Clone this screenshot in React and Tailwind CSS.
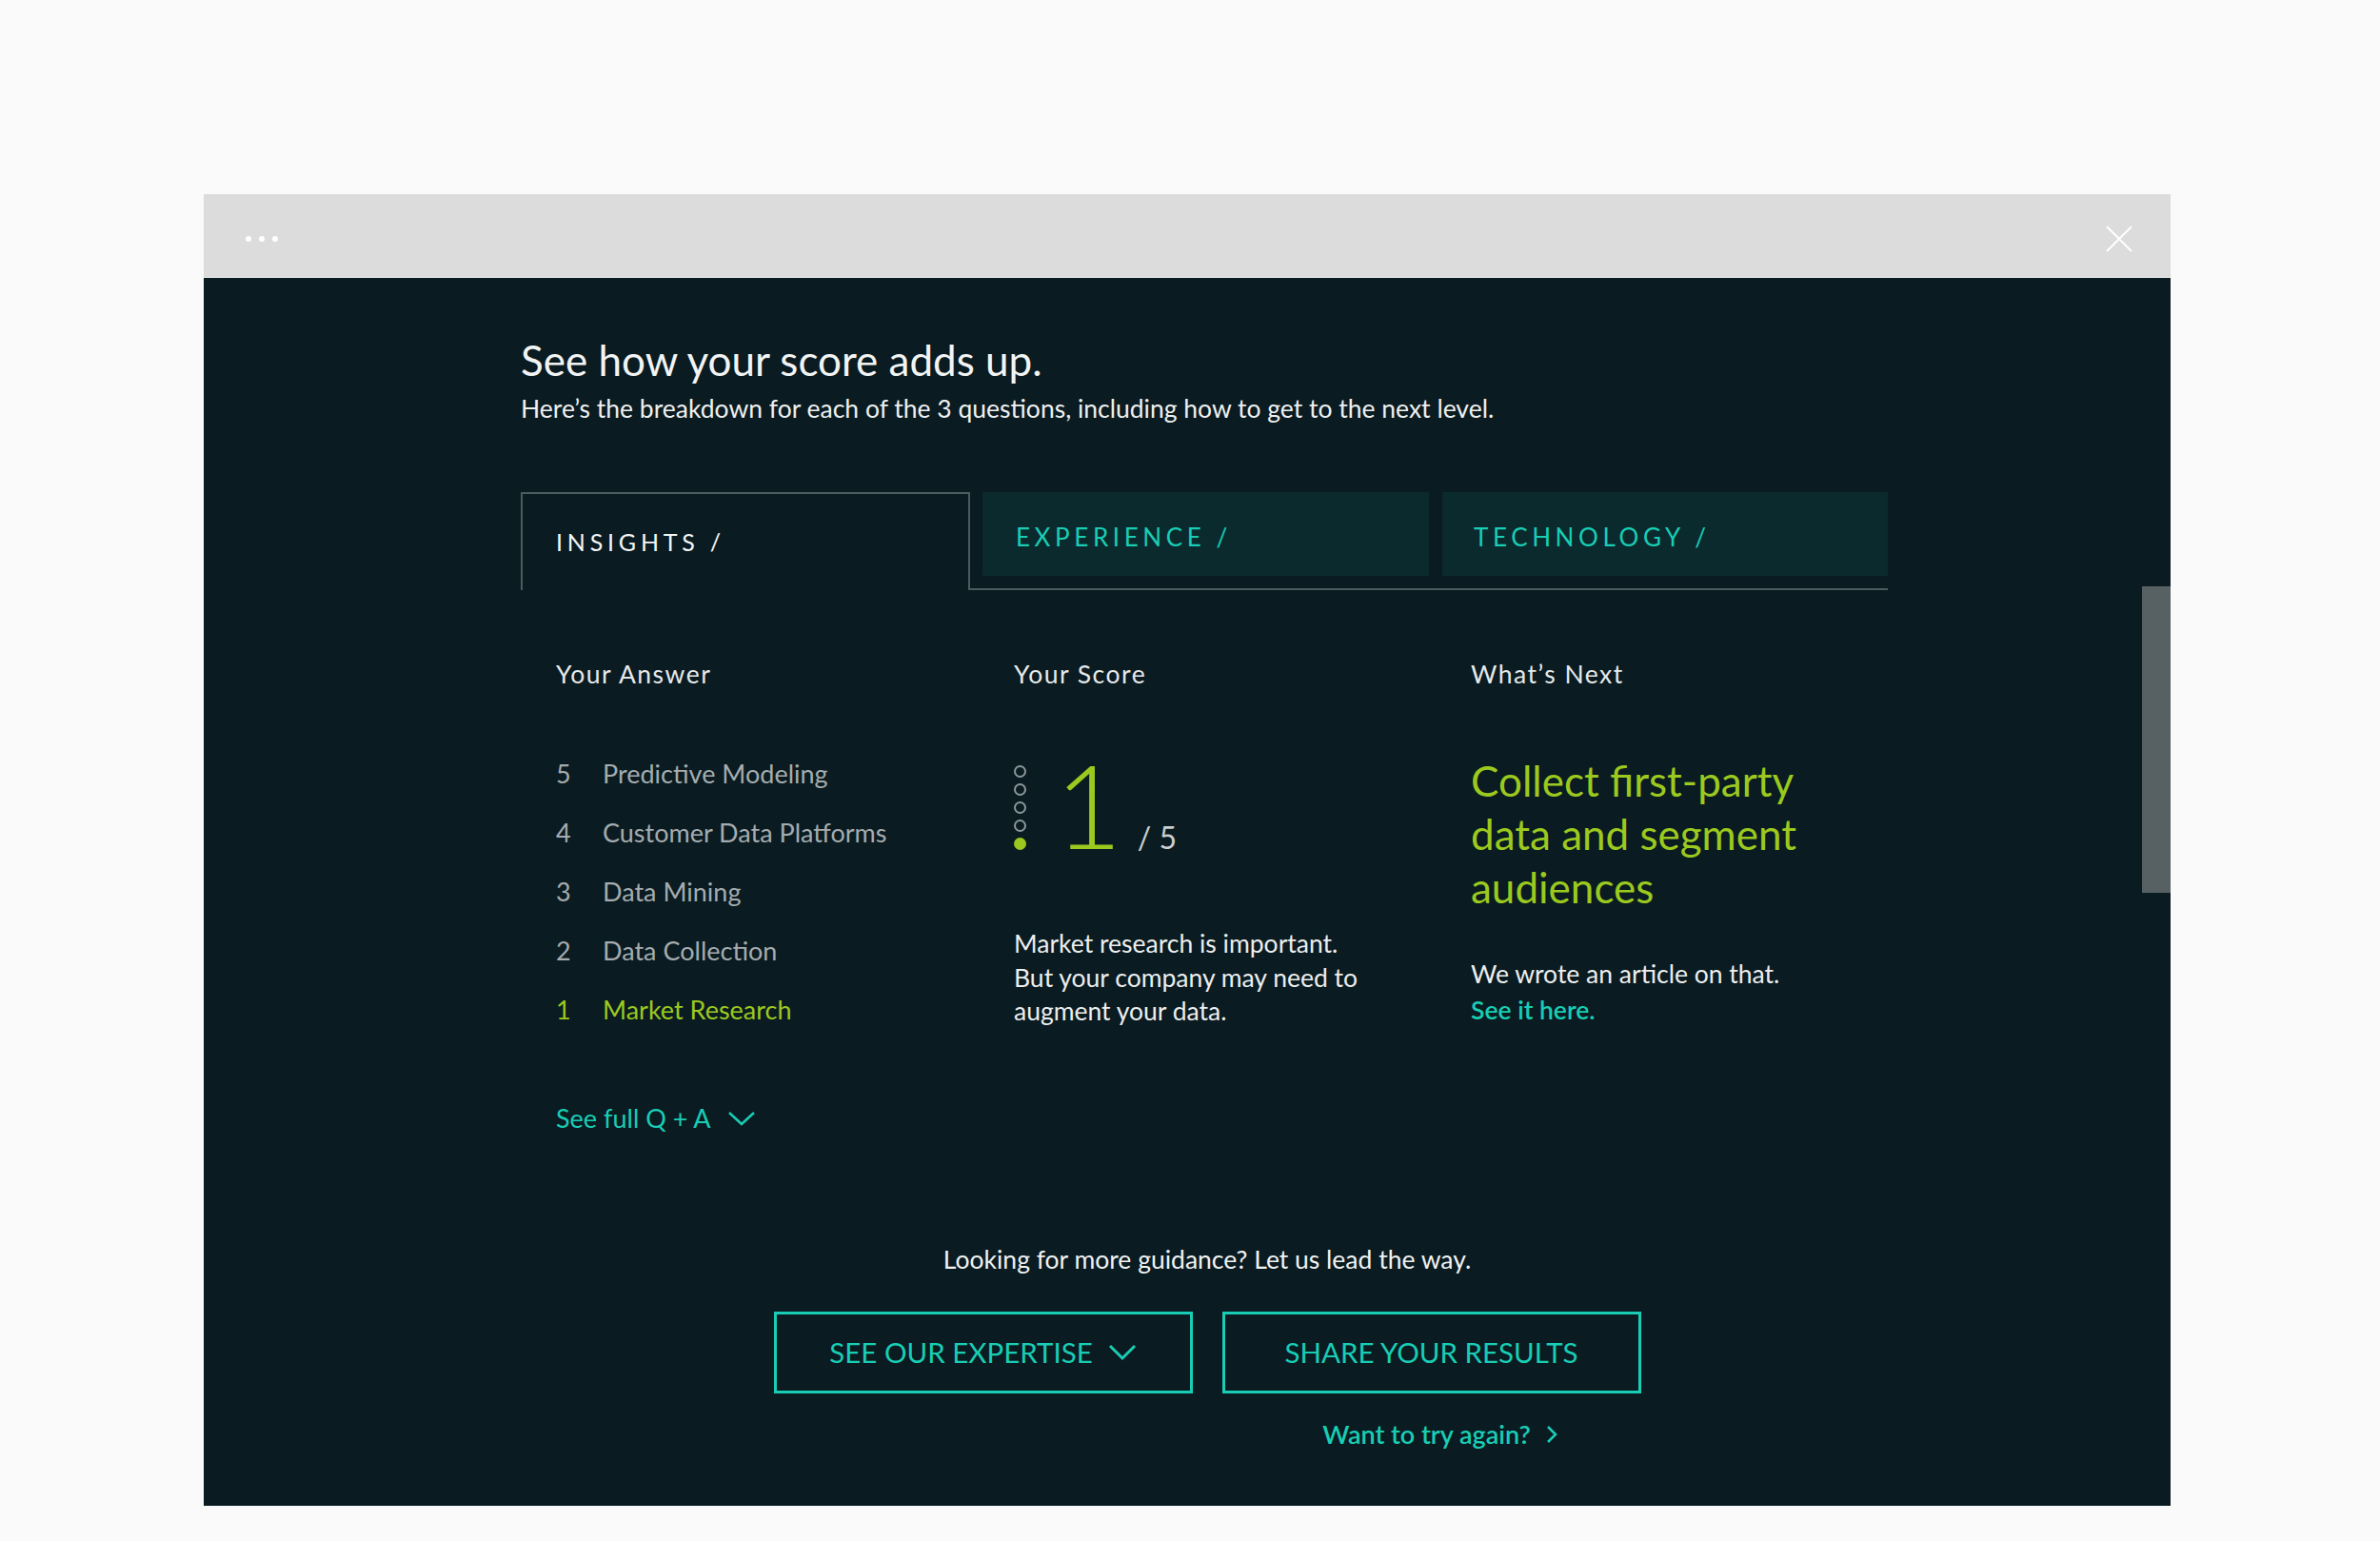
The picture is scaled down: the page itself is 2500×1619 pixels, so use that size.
export default function App() {
  const answers = [
    ["5", "Predictive Modeling"],
    ["4", "Customer Data Platforms"],
    ["3", "Data Mining"],
    ["2", "Data Collection"],
    ["1", "Market Research"],
  ];
  return (
    <div className="min-h-screen bg-[#fafafa] pt-[204px] pb-[37px] font-[Lato,sans-serif]">
      <div className="ml-[214px] w-[2066px]">
        <div className="flex h-[88px] items-center justify-between border-b border-[#e6e6e6] bg-[#dcdcdc] pl-[44px] pr-[40px] pt-[6px]">
          <div className="flex gap-[8px]">
            <div className="h-[6px] w-[6px] rounded-full bg-white" />
            <div className="h-[6px] w-[6px] rounded-full bg-white" />
            <div className="h-[6px] w-[6px] rounded-full bg-white" />
          </div>
          <svg width="28" height="28" viewBox="0 0 28 28">
            <path d="M1 1L27 27M27 1L1 27" stroke="white" strokeWidth="2" />
          </svg>
        </div>

        <div className="relative h-[1290px] bg-[#0a1b21] pl-[333px] pt-[62px]">
          <div className="w-[1436px]">
            <h1 className="text-[44px] leading-[48px] font-normal text-[#f2f4f4]">
              See how your score adds up.
            </h1>
            <p className="mt-[11px] text-[26.5px] leading-[32px] text-[#eef0f0]">
              Here’s the breakdown for each of the 3 questions, including how to get to the next level.
            </p>

            <div className="mt-[72px] flex h-[103px]">
              <div className="flex w-[472px] items-center border-x-2 border-t-2 border-[#4d5b5d] pl-[35px] text-[25px] tracking-[4.8px] text-[#f4f6f6]">
                INSIGHTS /
              </div>
              <div className="flex flex-1 items-start gap-[14px] border-b-2 border-[#4d5b5d] pl-[13px]">
                <div className="flex h-[88px] w-[469px] items-center bg-[#0b2a2e] pl-[35px] pt-[6px] text-[26px] tracking-[4.6px] text-[#19cdb5]">
                  EXPERIENCE /
                </div>
                <div className="flex h-[88px] w-[468px] items-center bg-[#0b2a2e] pl-[33px] pt-[6px] text-[26px] tracking-[4.6px] text-[#19cdb5]">
                  TECHNOLOGY /
                </div>
              </div>
            </div>

            <div className="mt-[72px] grid grid-cols-[484px_484px_468px]">
              <div className="pl-[37px]">
                <div className="text-[26.5px] leading-[32px] tracking-[1.5px] text-[#e6e9ea]">Your Answer</div>
                <div className="mt-[58px]">
                  {answers.map(([n, label]) => {
                    const active = n === "1";
                    return (
                      <div
                        key={n}
                        className={
                          active
                            ? "flex h-[62px] items-center text-[27px] text-[#9bc91f]"
                            : "flex h-[62px] items-center text-[27px] text-[#a4acaf]"
                        }
                      >
                        <span className="w-[49px]">{n}</span>
                        <span>{label}</span>
                      </div>
                    );
                  })}
                </div>
                <div className="mt-[65px] flex items-center gap-[17px] text-[27px] leading-[36px] text-[#19cdb5]">
                  <span>See full Q + A</span>
                  <svg width="30" height="16" viewBox="0 0 30 16" fill="none">
                    <path d="M2 2L15 14L28 2" stroke="#19cdb5" strokeWidth="2.6" />
                  </svg>
                </div>
              </div>

              <div className="pl-[34px]">
                <div className="text-[26.5px] leading-[32px] tracking-[1.5px] text-[#e6e9ea]">Your Score</div>
                <div className="mt-[60px] flex items-start">
                  <div className="mt-[20px] flex flex-col gap-[6px]">
                    <div className="h-[13px] w-[13px] rounded-full border-2 border-[#8d9799]" />
                    <div className="h-[13px] w-[13px] rounded-full border-2 border-[#8d9799]" />
                    <div className="h-[13px] w-[13px] rounded-full border-2 border-[#8d9799]" />
                    <div className="h-[13px] w-[13px] rounded-full border-2 border-[#8d9799]" />
                    <div className="h-[13px] w-[13px] rounded-full bg-[#9bc91f]" />
                  </div>
                  <div className="ml-[30px] flex items-baseline">
                    <span className="text-[122px] leading-[122px] font-light text-[#9bc91f]">1</span>
                    <span className="ml-[16px] text-[32px] text-[#c9cfd1]">/ 5</span>
                  </div>
                </div>
                <p className="mt-[68px] text-[26.5px] leading-[35.5px] text-[#eceeee]">
                  Market research is important.
                  <br />
                  But your company may need to
                  <br />
                  augment your data.
                </p>
              </div>

              <div className="pl-[30px]">
                <div className="text-[26.5px] leading-[32px] tracking-[1.5px] text-[#e6e9ea]">What’s Next</div>
                <div className="mt-[68px] text-[44px] leading-[56px] text-[#9bc91f]">
                  Collect first-party
                  <br />
                  data and segment
                  <br />
                  audiences
                </div>
                <p className="mt-[44px] text-[26.5px] leading-[38px] text-[#eceeee]">
                  We wrote an article on that.
                  <br />
                  <a className="font-semibold text-[#19cdb5]">See it here.</a>
                </p>
              </div>
            </div>

            <div className="pl-[6px]">
              <p className="mt-[114px] text-center text-[26.5px] leading-[32px] text-[#f0f2f2]">
                Looking for more guidance? Let us lead the way.
              </p>
              <div className="mt-[39px] flex justify-center gap-[31px]">
                <button className="flex h-[86px] w-[440px] items-center justify-center gap-[16px] border-[3px] border-[#19cdb5] text-[29.5px] text-[#19cdb5]">
                  <span>SEE OUR EXPERTISE</span>
                  <svg width="30" height="18" viewBox="0 0 30 18" fill="none">
                    <path d="M2 2L15 15L28 2" stroke="#19cdb5" strokeWidth="3" />
                  </svg>
                </button>
                <button className="flex h-[86px] w-[440px] items-center justify-center border-[3px] border-[#19cdb5] text-[29.5px] text-[#19cdb5]">
                  SHARE YOUR RESULTS
                </button>
              </div>
              <div className="mt-[25px] flex justify-center gap-[31px]">
                <div className="w-[440px]" />
                <div className="flex w-[440px] items-center justify-center gap-[16px] pl-[18px] text-[27px] leading-[36px] font-semibold text-[#19cdb5]">
                  <span>Want to try again?</span>
                  <svg width="12" height="20" viewBox="0 0 12 20" fill="none">
                    <path d="M2 2L10 10L2 18" stroke="#19cdb5" strokeWidth="2.6" />
                  </svg>
                </div>
              </div>
            </div>
          </div>

          <div className="absolute right-0 top-[324px] h-[322px] w-[30px] bg-[#576163]" />
        </div>
      </div>
    </div>
  );
}
